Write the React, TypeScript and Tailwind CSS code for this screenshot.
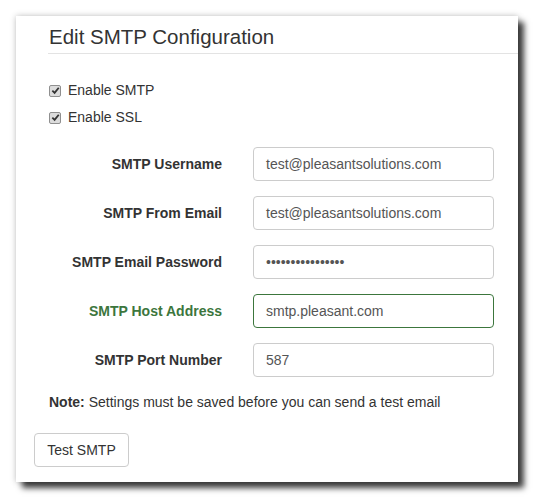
const fields = [
  { label: "SMTP Username", value: "test@pleasantsolutions.com" },
  { label: "SMTP From Email", value: "test@pleasantsolutions.com" },
  { label: "SMTP Email Password", value: "••••••••••••••••", password: true },
  { label: "SMTP Host Address", value: "smtp.pleasant.com", success: true },
  { label: "SMTP Port Number", value: "587" },
];

const CheckBox = () => (
  <span className="flex h-[12px] w-[12px] items-center justify-center rounded-[2px] border border-[#8f8f8f] bg-[#dcdcdc]">
    <svg width="9" height="9" viewBox="0 0 10 10">
      <path d="M1.5 5.2 L4 7.6 L8.6 2" fill="none" stroke="#333" strokeWidth="2" />
    </svg>
  </span>
);

export default function App() {
  return (
    <div
      className="h-[499px] w-[535px] overflow-hidden bg-white pl-[16px] pt-[16px] text-[#333]"
      style={{ fontFamily: '"Liberation Sans", Arial, sans-serif' }}
    >
      <div className="flex h-[466px] w-[502px] flex-col bg-white shadow-[0_0_6px_rgba(0,0,0,0.25),6px_6px_6px_rgba(0,0,0,0.75)]">
        <div className="pl-[32px] pt-[8px]">
          <h1 className="border-b border-[#e3e3e3] pb-[3px] pl-[1px] text-[20.5px] leading-[26px] text-[#333]">
            Edit SMTP Configuration
          </h1>
        </div>

        <div className="mt-[26px] flex flex-col gap-[6px] pl-[33px] text-[14px]">
          <label className="flex items-center gap-[7px]">
            <CheckBox />
            <span>Enable SMTP</span>
          </label>
          <label className="flex items-center gap-[7px]">
            <CheckBox />
            <span>Enable SSL</span>
          </label>
        </div>

        <div className="mt-[19px] flex flex-col gap-[15px]">
          {fields.map((f) => (
            <div key={f.label} className="flex items-center">
              <div
                className={
                  "w-[206px] text-right text-[14px] font-bold " +
                  (f.success ? "text-[#3c763d]" : "text-[#333]")
                }
              >
                {f.label}
              </div>
              <div
                className={
                  "ml-[31px] flex h-[34px] w-[241px] items-center rounded-[4px] border px-[12px] text-[14px] text-[#555] " +
                  (f.success ? "border-[#3c763d]" : "border-[#ccc]")
                }
              >
                {f.value}
              </div>
            </div>
          ))}
        </div>

        <p className="mt-[15px] pl-[33px] text-[14px]">
          <strong>Note:</strong> Settings must be saved before you can send a test email
        </p>

        <div className="mt-[20px] pl-[18px]">
          <button className="h-[34px] w-[95px] rounded-[4px] border border-[#ccc] bg-white text-[14px] text-[#333]">
            Test SMTP
          </button>
        </div>
      </div>
    </div>
  );
}
